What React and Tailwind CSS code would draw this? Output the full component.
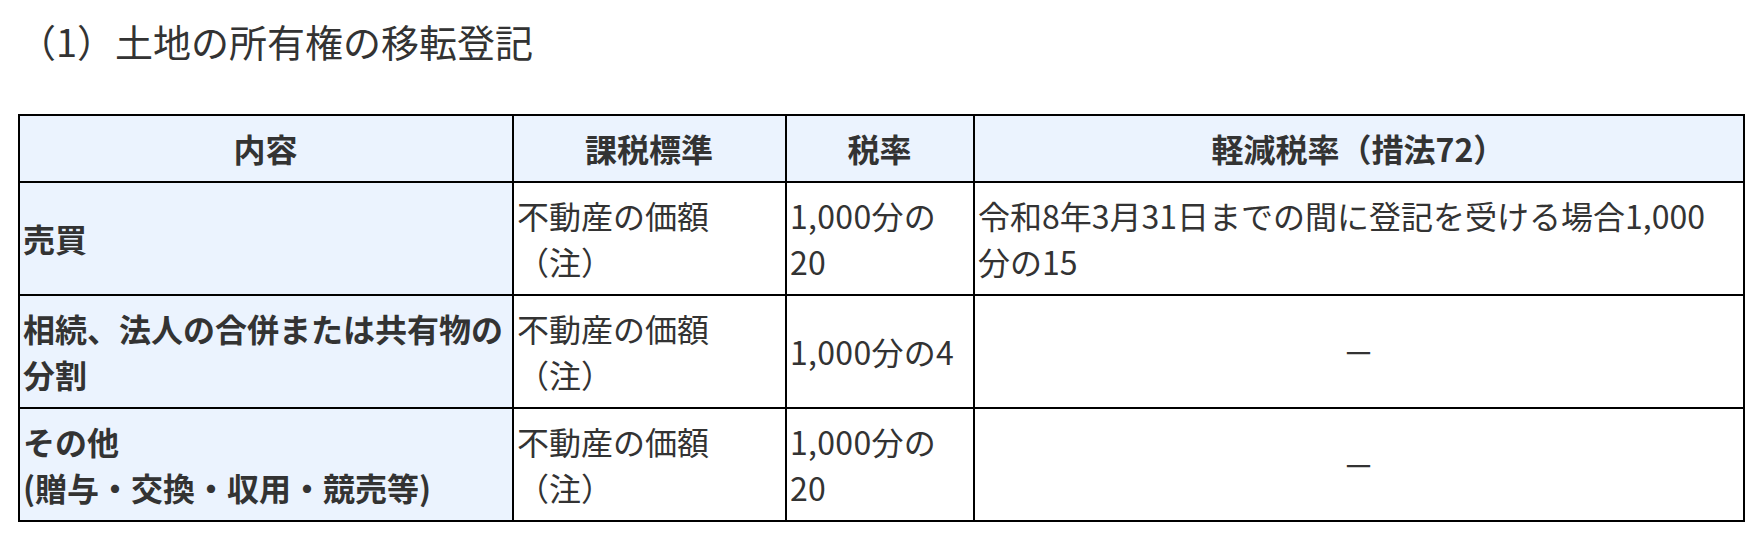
import React from 'react';

const rows = [
    {
        label: <>売買</>,
        base: <>不動産の価額<br />（注）</>,
        rate: <>1,000分の<br />20</>,
        reduced: <>令和8年3月31日までの間に登記を受ける場合1,000<br />分の15</>,
    },
    {
        label: <>相続、法人の合併または共有物の<br />分割</>,
        base: <>不動産の価額<br />（注）</>,
        rate: <>1,000分の4</>,
        reduced: null,
    },
    {
        label: <>その他<br />(贈与・交換・収用・競売等)</>,
        base: <>不動産の価額<br />（注）</>,
        rate: <>1,000分の<br />20</>,
        reduced: null,
    },
];

export default function App() {
    const font = { fontFamily: '"Noto Sans CJK JP", "Noto Sans", sans-serif' };
    const cell = 'border-2 border-black pl-[3px] pr-[4px] pt-[9px] pb-[10px] align-middle';

    return (
        <div className="bg-white min-h-[543px] px-[18px] text-[#333]" style={font}>
            {/* Title */}
            <h2 className="pt-[14px] mb-[46px] text-[38px] leading-[54px] font-normal">（1）土地の所有権の移転登記</h2>

            <table className="w-[1725px] table-fixed border-collapse text-[32px] leading-[46px]">
                <colgroup>
                    <col className="w-[494px]" />
                    <col className="w-[273px]" />
                    <col className="w-[188px]" />
                    <col className="w-[770px]" />
                </colgroup>
                <thead className="bg-[#ebf3fe]">
                    <tr>
                        {['内容', '課税標準', '税率', '軽減税率（措法72）'].map(h => (
                            <th key={h} className={`${cell} text-center font-bold`}>{h}</th>
                        ))}
                    </tr>
                </thead>
                <tbody>
                    {rows.map((r, i) => (
                        <tr key={i}>
                            <td className={`${cell} bg-[#ebf3fe] font-bold`}>{r.label}</td>
                            <td className={cell}>{r.base}</td>
                            <td className={`${cell} tracking-[0.3px]`}>{r.rate}</td>
                            <td className={`${cell} ${r.reduced ? '' : 'text-center'}`}>
                                {r.reduced || '－'}
                            </td>
                        </tr>
                    ))}
                </tbody>
            </table>
        </div>
    );
}
